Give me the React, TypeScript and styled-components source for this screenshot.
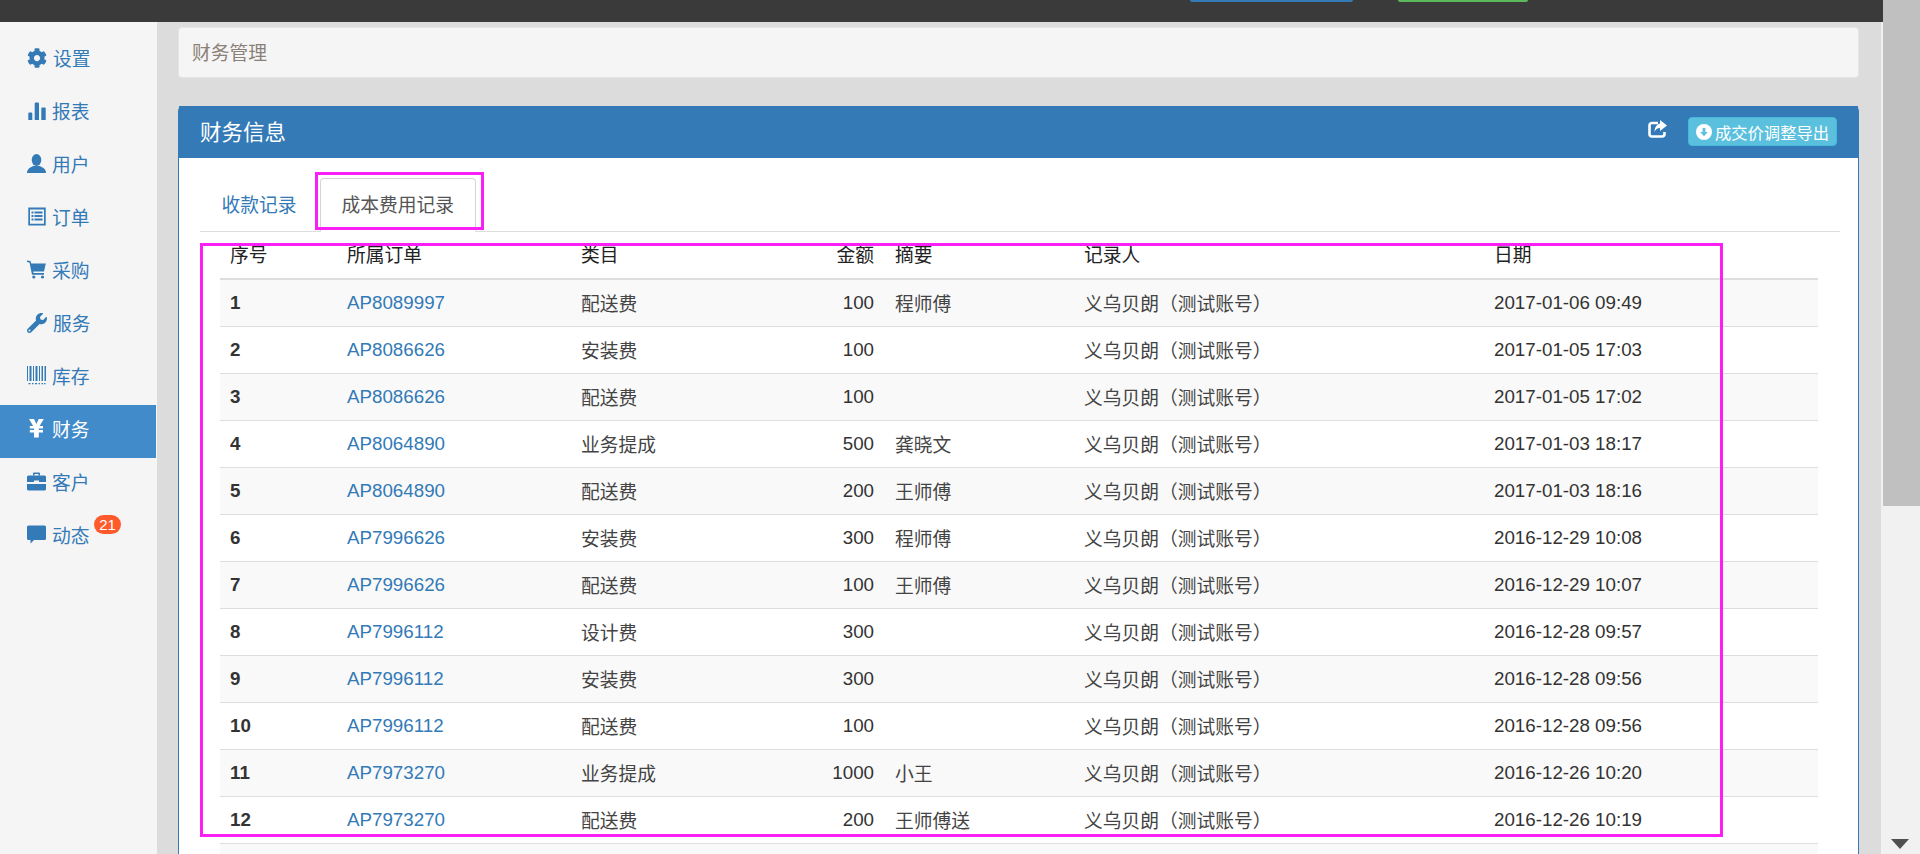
import React from 'react';
import styled, { createGlobalStyle } from 'styled-components';
import { FaCog, FaWrench } from 'react-icons/fa';

const GlobalStyle = createGlobalStyle`
  html, body {
    margin: 0;
    padding: 0;
    height: 854px;
    overflow: hidden;
  }
  body {
    font-family: 'Liberation Sans', 'Noto Sans CJK SC', sans-serif;
    font-size: 18.75px;
    color: #333;
  }
  * {
    box-sizing: border-box;
  }
`;

const Page = styled.div`
  position: relative;
  display: flex;
  width: 1920px;
  height: 854px;
  overflow: hidden;
`;

const Content = styled.div`
  display: flex;
  flex-direction: column;
  flex: 1;
  min-width: 0;
`;

const TopBar = styled.header`
  display: flex;
  flex: 0 0 22px;
  gap: 45px;
  padding-left: 1190px;
  background: #3a3a3a;
`;

const TopButton = styled.div<{ $color: string; $width: number }>`
  width: ${(p) => p.$width}px;
  height: 2px;
  border-radius: 0 0 3px 3px;
  background: ${(p) => p.$color};
`;

const Body = styled.div`
  display: flex;
  flex: 1;
  min-height: 0;
`;

const Sidebar = styled.nav`
  flex: 0 0 157px;
  padding: 12px 1px 0 0;
  background: #f5f5f5;
`;

const NavItem = styled.a<{ $active?: boolean }>`
  position: relative;
  display: flex;
  align-items: center;
  gap: 6px;
  height: 53px;
  padding: 0 0 6px 27px;
  color: ${(p) => (p.$active ? '#fff' : '#337ab7')};
  background: ${(p) => (p.$active ? '#428bca' : 'transparent')};
`;

const NavIcon = styled.svg`
  flex: 0 0 19px;
  width: 19px;
  height: 19px;
  fill: currentColor;
`;

const NavGlyph = styled.span`
  display: flex;
  flex: 0 0 19px;
  justify-content: center;
  font-size: 20px;
`;

const Badge = styled.span`
  position: absolute;
  top: 4px;
  left: 94px;
  width: 27px;
  height: 19px;
  border-radius: 10px;
  background: #ff5a2c;
  color: #fff;
  font-size: 15px;
  line-height: 19px;
  text-align: center;
`;

const Main = styled.main`
  display: flex;
  flex-direction: column;
  flex: 1;
  min-width: 0;
  padding: 5px 22px 0 21px;
  border-right: 2px solid #f1f1f1;
  background: #dcdcdc;
  overflow: hidden;
`;

const Breadcrumb = styled.div`
  display: flex;
  align-items: center;
  flex: 0 0 51px;
  margin-bottom: 28px;
  padding: 0 0 2px 13px;
  border: 1px solid #e6e6e6;
  border-radius: 4px;
  background: #f5f5f5;
  color: #8a8078;
`;

const Panel = styled.section`
  flex: 1;
  border: 1px solid #337ab7;
  border-bottom: 0;
  border-radius: 5px 5px 0 0;
  background: #fff;
`;

const PanelHeading = styled.div`
  display: flex;
  align-items: center;
  height: 52px;
  margin-top: -1px;
  padding: 0 21px 1px;
  background: #337ab7;
  color: #fff;
`;

const PanelTitle = styled.h3`
  flex: 1;
  margin: 0 0 2px;
  font-size: 21.5px;
  font-weight: 400;
`;

const ShareIcon = styled.svg`
  width: 19px;
  height: 19px;
  margin: 0 21px 4px 0;
`;

const ExportButton = styled.button`
  display: flex;
  align-items: center;
  gap: 3px;
  height: 29px;
  padding: 0 7px;
  border: 1px solid #46b8da;
  border-radius: 4px;
  background: #5bc0de;
  color: #fff;
  font: inherit;
  font-size: 16.3px;
`;

const PanelBody = styled.div`
  padding: 20px 18px 0 21px;
`;

const Tabs = styled.ul`
  display: flex;
  gap: 2px;
  height: 54px;
  margin: 0;
  padding: 0;
  border-bottom: 1px solid #ddd;
  list-style: none;
`;

const Tab = styled.li<{ $active?: boolean }>`
  display: flex;
  align-items: center;
  height: 54px;
  padding: 0 20.5px 3px;
  border: 1px solid ${(p) => (p.$active ? '#d5d5d5' : 'transparent')};
  border-bottom-color: ${(p) => (p.$active ? '#fff' : 'transparent')};
  border-radius: 4px 4px 0 0;
  color: ${(p) => (p.$active ? '#555' : '#337ab7')};
`;

const Table = styled.table`
  width: 1598px;
  margin-left: 20px;
  border-collapse: separate;
  border-spacing: 0;
  table-layout: fixed;
`;

const Th = styled.th<{ $right?: boolean }>`
  height: 48px;
  padding: 0 ${(p) => (p.$right ? 11 : 10)}px 4px 10px;
  border-bottom: 2px solid #ddd;
  color: #222;
  font-weight: 400;
  text-align: ${(p) => (p.$right ? 'right' : 'left')};
`;

const Row = styled.tr<{ $striped: boolean }>`
  background: ${(p) => (p.$striped ? '#f9f9f9' : '#fff')};
`;

const Td = styled.td<{ $right?: boolean; $bold?: boolean; $cjk?: boolean }>`
  height: 47px;
  padding: 0 ${(p) => (p.$right ? 11 : 10)}px ${(p) => (p.$cjk ? 2 : 0)}px 10px;
  border-bottom: 1px solid #ddd;
  color: ${(p) => (p.$cjk ? '#444' : '#333')};
  font-weight: ${(p) => (p.$bold ? 700 : 400)};
  text-align: ${(p) => (p.$right ? 'right' : 'left')};
  white-space: nowrap;
`;

const OrderLink = styled.a`
  color: #337ab7;
`;

const Scrollbar = styled.div`
  display: flex;
  flex-direction: column;
  flex: 0 0 37px;
  background: #f1f1f1;
`;

const ScrollThumb = styled.div`
  flex: 0 0 506px;
  background: #c0c0c0;
`;

const ScrollArrow = styled.div`
  align-self: center;
  width: 0;
  height: 0;
  margin: auto 3px 5px 0;
  border-top: 10px solid #505050;
  border-left: 9.5px solid transparent;
  border-right: 9.5px solid transparent;
`;

const Annotation = styled.div<{ $left: number; $top: number; $width: number; $height: number }>`
  position: absolute;
  left: ${(p) => p.$left}px;
  top: ${(p) => p.$top}px;
  width: ${(p) => p.$width}px;
  height: ${(p) => p.$height}px;
  border: 3px solid #f91ff5;
  pointer-events: none;
`;

const StatsIcon = () => (
  <NavIcon viewBox='0 0 19 19'>
    <path d='M1.3 12.5q0-1 1-1h2q1 0 1 1V19h-4zM7.7 2.5q0-1 1-1h2.3q1 0 1 1V19H7.7zM14.3 7.5q0-1 1-1h2.4q1 0 1 1V19h-4.4z' />
  </NavIcon>
);

const UserIcon = () => (
  <NavIcon viewBox='0 0 19 19'>
    <ellipse cx='9.5' cy='6' rx='4.8' ry='6' />
    <path d='M0 19c0-4 3-5.5 6.5-7h6c3.500 1.500 6.500 3 6.500 7z' />
  </NavIcon>
);

const ListIcon = () => (
  <NavIcon viewBox='0 0 19 19'>
    <path
      fillRule='evenodd'
      d='M1.300 0.500h17.400v18H1.300zM3 2.500v14.200h14V2.500z'
    />
    <path d='M4.500 4.500h2v2h-2zM7.500 4.500h8v2h-8zM4.500 8h2v2h-2zM7.500 8h8v2h-8zM4.500 11.500h2v2h-2zM7.500 11.500h8v2h-8z' />
  </NavIcon>
);

const CartIcon = () => (
  <NavIcon viewBox='0 0 19 19'>
    <path d='M0 0.500l3.500 0.500 0.800 2.500H18.800L17 11.500H6.200l0.400 1.500H17v1.800H5L2.500 2.500 0 2z' />
    <circle cx='6.800' cy='17' r='1.600' />
    <circle cx='15.500' cy='17' r='1.600' />
  </NavIcon>
);

const BarcodeIcon = () => (
  <NavIcon viewBox='0 0 19 19'>
    <path d='M0 0h1v15H0zM2.500 0h2v15h-2zM6 0h1v15H6zM8.500 0h2v15h-2zM12 0h1v15h-1zM14.500 0h1.500v15h-1.500zM17.500 0H19v15h-1.500z' />
    <path d='M1.500 17h2v1.200h-2zM5 17h1.500v1.200H5zM8 17h2v1.200H8zM11.500 17H13v1.200h-1.500zM14.500 17h1.500v1.200h-1.500zM17 17h1.500v1.200H17z' />
  </NavIcon>
);

const YenIcon = () => (
  <NavIcon viewBox='0 0 19 19'>
    <path d='M2 0h5l2.400 5 2.400-5h5l-4.200 7H16v2.500h-4.200V11H16v2.500h-4.200V18.500H7v-5H2.800V11H7V9.500H2.800V7h3.400z' />
  </NavIcon>
);

const BriefcaseIcon = () => (
  <NavIcon viewBox='0 0 19 19'>
    <path d='M6 3.500V1.500Q6 0.500 7 0.500h5q1 0 1 1v2h-1.500v-1.500h-4v1.500z' />
    <path d='M0 5Q0 3.500 1.500 3.500h16Q19 3.500 19 5v5h-7V8.500H7V10H0z' />
    <path d='M0 12h19v5q0 1.500-1.500 1.500h-16Q0 18.500 0 17z' />
  </NavIcon>
);

const CommentIcon = () => (
  <NavIcon viewBox='0 0 19 19'>
    <path d='M1.500 0.500h16Q19 0.500 19 2v11.500q0 1.500-1.500 1.500H7l-3.500 3.500V15h-2Q0 15 0 13.500V2Q0 0.500 1.500 0.500z' />
  </NavIcon>
);

const navItems = [
  { label: '设置', icon: <NavGlyph><FaCog /></NavGlyph> },
  { label: '报表', icon: <StatsIcon /> },
  { label: '用户', icon: <UserIcon /> },
  { label: '订单', icon: <ListIcon /> },
  { label: '采购', icon: <CartIcon /> },
  { label: '服务', icon: <NavGlyph><FaWrench /></NavGlyph> },
  { label: '库存', icon: <BarcodeIcon /> },
  { label: '财务', icon: <YenIcon />, active: true },
  { label: '客户', icon: <BriefcaseIcon /> },
  { label: '动态', icon: <CommentIcon />, badge: '21' },
];

const columns = [117, 234, 209, 105, 189, 410, 334];

const rows = [
  ['AP8089997', '配送费', '100', '程师傅', '2017-01-06 09:49'],
  ['AP8086626', '安装费', '100', '', '2017-01-05 17:03'],
  ['AP8086626', '配送费', '100', '', '2017-01-05 17:02'],
  ['AP8064890', '业务提成', '500', '龚晓文', '2017-01-03 18:17'],
  ['AP8064890', '配送费', '200', '王师傅', '2017-01-03 18:16'],
  ['AP7996626', '安装费', '300', '程师傅', '2016-12-29 10:08'],
  ['AP7996626', '配送费', '100', '王师傅', '2016-12-29 10:07'],
  ['AP7996112', '设计费', '300', '', '2016-12-28 09:57'],
  ['AP7996112', '安装费', '300', '', '2016-12-28 09:56'],
  ['AP7996112', '配送费', '100', '', '2016-12-28 09:56'],
  ['AP7973270', '业务提成', '1000', '小王', '2016-12-26 10:20'],
  ['AP7973270', '配送费', '200', '王师傅送', '2016-12-26 10:19'],
];

export default function App() {
  return (
    <Page>
      <GlobalStyle />
      <Content>
        <TopBar>
          <TopButton $color='#337ab7' $width={163} />
          <TopButton $color='#5cb85c' $width={130} />
        </TopBar>
        <Body>
          <Sidebar>
            {navItems.map((item) => (
              <NavItem key={item.label} $active={item.active}>
                {item.icon}
                {item.label}
                {item.badge && <Badge>{item.badge}</Badge>}
              </NavItem>
            ))}
          </Sidebar>
          <Main>
            <Breadcrumb>财务管理</Breadcrumb>
            <Panel>
              <PanelHeading>
                <PanelTitle>财务信息</PanelTitle>
                <ShareIcon viewBox='0 0 19 19'>
                  <path
                    d='M10 3H4Q1.500 3 1.500 5.500V14Q1.500 16.500 4 16.500H14Q16.500 16.500 16.500 14V12'
                    fill='none'
                    stroke='#fff'
                    strokeWidth='2.6'
                  />
                  <path d='M12 0l7 5.500-7 5.500V8Q8 8 6.500 12q0-7 5.500-8.500z' fill='#fff' />
                </ShareIcon>
                <ExportButton>
                  <svg width='16' height='16' viewBox='0 0 16 16'>
                    <circle cx='8' cy='8' r='8' fill='#fff' />
                    <path d='M6.600 4H9.400V8H11.800L8 12.200 4.200 8H6.600z' fill='#5bc0de' />
                  </svg>
                  成交价调整导出
                </ExportButton>
              </PanelHeading>
              <PanelBody>
                <Tabs>
                  <Tab>收款记录</Tab>
                  <Tab $active>成本费用记录</Tab>
                </Tabs>
                <Table>
                  <colgroup>
                    {columns.map((width, idx) => (
                      <col key={idx} width={width} />
                    ))}
                  </colgroup>
                  <thead>
                    <tr>
                      <Th>序号</Th>
                      <Th>所属订单</Th>
                      <Th>类目</Th>
                      <Th $right>金额</Th>
                      <Th>摘要</Th>
                      <Th>记录人</Th>
                      <Th>日期</Th>
                    </tr>
                  </thead>
                  <tbody>
                    {rows.map((row, idx) => (
                      <Row key={idx} $striped={idx % 2 === 0}>
                        <Td $bold>{idx + 1}</Td>
                        <Td>
                          <OrderLink>{row[0]}</OrderLink>
                        </Td>
                        <Td $cjk>{row[1]}</Td>
                        <Td $right>{row[2]}</Td>
                        <Td $cjk>{row[3]}</Td>
                        <Td $cjk>义乌贝朗（测试账号）</Td>
                        <Td>{row[4]}</Td>
                      </Row>
                    ))}
                    <Row $striped>
                      <Td colSpan={7} />
                    </Row>
                  </tbody>
                </Table>
              </PanelBody>
            </Panel>
          </Main>
        </Body>
      </Content>
      <Scrollbar>
        <ScrollThumb />
        <ScrollArrow />
      </Scrollbar>
      <Annotation $left={315} $top={172} $width={169} $height={58} />
      <Annotation $left={200} $top={243} $width={1523} $height={594} />
    </Page>
  );
}
